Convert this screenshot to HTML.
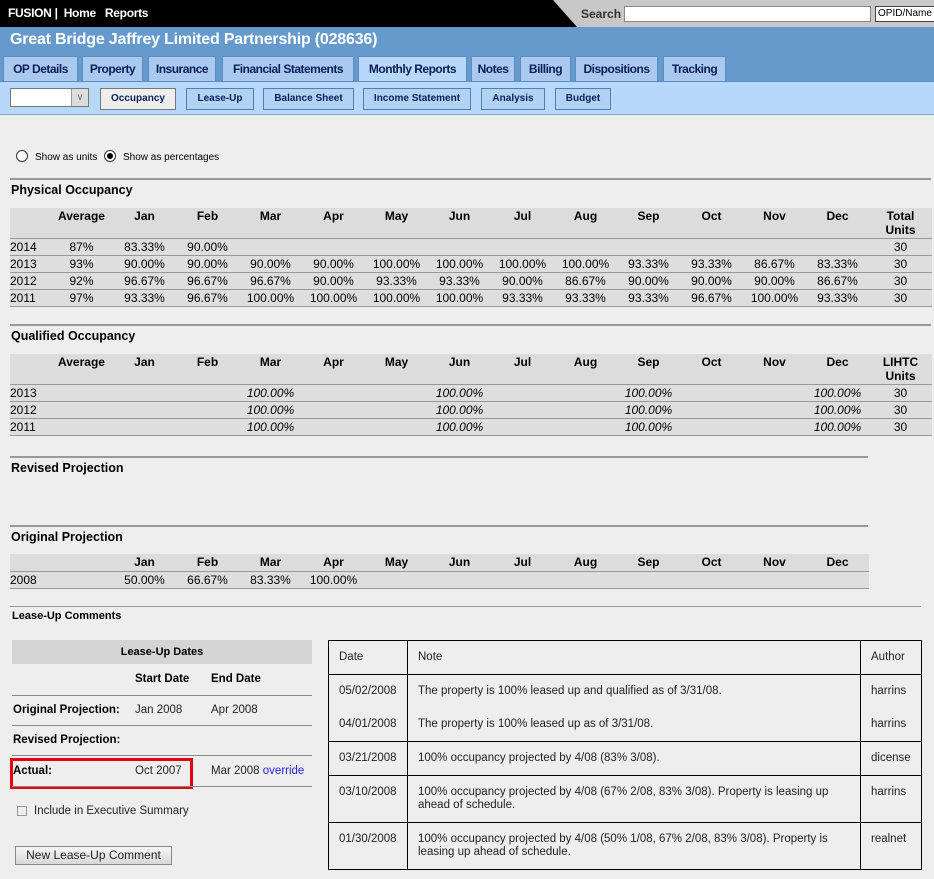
<!DOCTYPE html>
<html><head><meta charset="utf-8"><style>
*{margin:0;padding:0;box-sizing:border-box}
body{width:934px;height:879px;background:#eeeeee;font-family:"Liberation Sans",Arial,sans-serif;font-size:12px;color:#000;position:relative;overflow:hidden}
.a{position:absolute}
.top{left:0;top:0;width:934px;height:27px;background:#000}
.tab{position:absolute;top:56px;height:26px;background:#a9c9ee;border:1px solid #5c8cc0;border-bottom:none;color:#0a1e58;font-weight:bold;font-size:12px;letter-spacing:-0.5px;line-height:24px;text-align:center;white-space:nowrap}
.btn{position:absolute;top:88px;height:22px;background:#b2d2f4;border:1px solid #4e7eb4;color:#0a1e58;font-weight:bold;font-size:10px;line-height:20px;text-align:center}
.hr{position:absolute;height:2px;background:#999}
.ttl{position:absolute;left:11px;font-weight:bold;font-size:12.5px}
table.g{position:absolute;left:10px;border-collapse:collapse;table-layout:fixed;font-size:12px}
table.g td{text-align:center;padding:0;height:17px;border-bottom:1px solid #999;background:#dedede;white-space:nowrap}
table.g td:first-child{text-align:left}
table.g tr.h td{font-weight:bold;height:30px;vertical-align:top;padding-top:1px;background:#dcdcdc;line-height:14px}
table.g tr.s td{font-weight:bold;height:17px;background:#dcdcdc}
table.g i{font-style:italic}
table.c{position:absolute;left:328px;top:640px;width:593px;border-collapse:collapse;font-size:11.5px;color:#222;table-layout:fixed}
table.c td{border:1px solid #000;padding:0 10px;vertical-align:top}
</style></head><body>
<div class="a top"></div>
<div class="a" style="left:8px;top:6px;color:#fff;font-weight:bold;font-size:12px;letter-spacing:-0.3px">FUSION&nbsp;|&nbsp; Home &nbsp; Reports</div>
<div class="a" style="left:553px;top:0;width:381px;height:27px;background:#c8c8c8;clip-path:polygon(0 0,100% 0,100% 100%,24px 100%)"></div>
<div class="a" style="left:581px;top:7px;color:#333;font-weight:bold;font-size:12px">Search</div>
<div class="a" style="left:624px;top:6px;width:247px;height:16px;background:#fff;border:1px solid #888"></div>
<div class="a" style="left:875px;top:6px;width:60px;height:16px;background:#fff;border:1px solid #444;font-size:10px;line-height:14px;padding-left:2px">OPID/Name</div>
<div class="a" style="left:0;top:27px;width:934px;height:55px;background:#6699cc"></div>
<div class="a" style="left:10px;top:31px;color:#fff;font-weight:bold;font-size:16px;letter-spacing:-0.2px">Great Bridge Jaffrey Limited Partnership (028636)</div>
<div class="tab" style="left:3px;width:75px">OP Details</div>
<div class="tab" style="left:82px;width:61px">Property</div>
<div class="tab" style="left:148px;width:68px">Insurance</div>
<div class="tab" style="left:222px;width:132px">Financial Statements</div>
<div class="tab" style="left:358px;width:109px;background:#b8d8fa;height:27px">Monthly Reports</div>
<div class="tab" style="left:471px;width:44px">Notes</div>
<div class="tab" style="left:520px;width:51px">Billing</div>
<div class="tab" style="left:575px;width:83px">Dispositions</div>
<div class="tab" style="left:663px;width:63px">Tracking</div>
<div class="a" style="left:0;top:81px;width:934px;height:1px;background:#5c8cc0"></div>
<div class="a" style="left:0;top:82px;width:934px;height:33px;background:#b8d8fa;border-bottom:1px solid #7aa"></div>
<div class="a" style="left:10px;top:88px;width:79px;height:19px;background:#fff;border:1px solid #777"><div style="position:absolute;right:0;top:0;width:17px;height:17px;background:#ddd;border-left:1px solid #999;color:#777;font-size:10px;text-align:center;line-height:17px">&#8744;</div></div>
<div class="btn" style="left:100px;width:76px;background:#eee;border-color:#777">Occupancy</div>
<div class="btn" style="left:186px;width:68px">Lease-Up</div>
<div class="btn" style="left:263px;width:91px">Balance Sheet</div>
<div class="btn" style="left:363px;width:108px">Income Statement</div>
<div class="btn" style="left:481px;width:64px">Analysis</div>
<div class="btn" style="left:555px;width:56px">Budget</div>

<div class="a" style="left:16px;top:150px;width:12px;height:12px;border:1px solid #333;border-radius:50%;background:#fff"></div>
<div class="a" style="left:35px;top:152px;font-size:10px">Show as units</div>
<div class="a" style="left:104px;top:150px;width:12px;height:12px;border:1px solid #333;border-radius:50%;background:#fff"><div style="margin:2px;width:6px;height:6px;border-radius:50%;background:#000"></div></div>
<div class="a" style="left:123px;top:152px;font-size:10px">Show as percentages</div>

<div class="hr" style="left:10px;top:178px;width:921px"></div>
<div class="ttl" style="top:183px">Physical Occupancy</div>
<table class="g" style="top:208px;width:921px">
<colgroup><col style="width:40px"><col span="14" style="width:63px"></colgroup>
<tr class="h"><td></td><td>Average</td><td>Jan</td><td>Feb</td><td>Mar</td><td>Apr</td><td>May</td><td>Jun</td><td>Jul</td><td>Aug</td><td>Sep</td><td>Oct</td><td>Nov</td><td>Dec</td><td>Total<br>Units</td></tr>
<tr><td>2014</td><td>87%</td><td>83.33%</td><td>90.00%</td><td></td><td></td><td></td><td></td><td></td><td></td><td></td><td></td><td></td><td></td><td>30</td></tr>
<tr><td>2013</td><td>93%</td><td>90.00%</td><td>90.00%</td><td>90.00%</td><td>90.00%</td><td>100.00%</td><td>100.00%</td><td>100.00%</td><td>100.00%</td><td>93.33%</td><td>93.33%</td><td>86.67%</td><td>83.33%</td><td>30</td></tr>
<tr><td>2012</td><td>92%</td><td>96.67%</td><td>96.67%</td><td>96.67%</td><td>90.00%</td><td>93.33%</td><td>93.33%</td><td>90.00%</td><td>86.67%</td><td>90.00%</td><td>90.00%</td><td>90.00%</td><td>86.67%</td><td>30</td></tr>
<tr><td>2011</td><td>97%</td><td>93.33%</td><td>96.67%</td><td>100.00%</td><td>100.00%</td><td>100.00%</td><td>100.00%</td><td>93.33%</td><td>93.33%</td><td>93.33%</td><td>96.67%</td><td>100.00%</td><td>93.33%</td><td>30</td></tr>
</table>

<div class="hr" style="left:10px;top:324px;width:921px"></div>
<div class="ttl" style="top:329px">Qualified Occupancy</div>
<table class="g" style="top:354px;width:921px">
<colgroup><col style="width:40px"><col span="14" style="width:63px"></colgroup>
<tr class="h"><td></td><td>Average</td><td>Jan</td><td>Feb</td><td>Mar</td><td>Apr</td><td>May</td><td>Jun</td><td>Jul</td><td>Aug</td><td>Sep</td><td>Oct</td><td>Nov</td><td>Dec</td><td>LIHTC<br>Units</td></tr>
<tr><td>2013</td><td></td><td></td><td></td><td><i>100.00%</i></td><td></td><td></td><td><i>100.00%</i></td><td></td><td></td><td><i>100.00%</i></td><td></td><td></td><td><i>100.00%</i></td><td>30</td></tr>
<tr><td>2012</td><td></td><td></td><td></td><td><i>100.00%</i></td><td></td><td></td><td><i>100.00%</i></td><td></td><td></td><td><i>100.00%</i></td><td></td><td></td><td><i>100.00%</i></td><td>30</td></tr>
<tr><td>2011</td><td></td><td></td><td></td><td><i>100.00%</i></td><td></td><td></td><td><i>100.00%</i></td><td></td><td></td><td><i>100.00%</i></td><td></td><td></td><td><i>100.00%</i></td><td>30</td></tr>
</table>

<div class="hr" style="left:10px;top:456px;width:858px"></div>
<div class="ttl" style="top:461px">Revised Projection</div>
<div class="hr" style="left:10px;top:525px;width:858px"></div>
<div class="ttl" style="top:530px">Original Projection</div>
<table class="g" style="top:554px;width:858px">
<colgroup><col style="width:40px"><col span="13" style="width:63px"></colgroup>
<tr class="s"><td></td><td></td><td>Jan</td><td>Feb</td><td>Mar</td><td>Apr</td><td>May</td><td>Jun</td><td>Jul</td><td>Aug</td><td>Sep</td><td>Oct</td><td>Nov</td><td>Dec</td></tr>
<tr><td>2008</td><td></td><td>50.00%</td><td>66.67%</td><td>83.33%</td><td>100.00%</td><td></td><td></td><td></td><td></td><td></td><td></td><td></td><td></td></tr>
</table>

<div class="a" style="left:10px;top:606px;width:911px;height:1px;background:#999"></div>
<div class="a" style="left:12px;top:610px;font-weight:bold;font-size:11px">Lease-Up Comments</div>

<div class="a" style="left:12px;top:640px;width:300px;height:24px;background:#d4d4d4;text-align:center;font-weight:bold;font-size:11px;line-height:24px">Lease-Up Dates</div>
<div class="a" style="left:135px;top:673px;font-weight:bold;font-size:11.5px">Start Date</div>
<div class="a" style="left:211px;top:673px;font-weight:bold;font-size:11.5px">End Date</div>
<div class="a" style="left:12px;top:695px;width:300px;height:1px;background:#888"></div>
<div class="a" style="left:13px;top:704px;font-weight:bold;font-size:11.5px">Original Projection:</div>
<div class="a" style="left:135px;top:704px;font-size:11.5px;color:#222">Jan 2008</div>
<div class="a" style="left:211px;top:704px;font-size:11.5px;color:#222">Apr 2008</div>
<div class="a" style="left:12px;top:725px;width:300px;height:1px;background:#888"></div>
<div class="a" style="left:13px;top:734px;font-weight:bold;font-size:11.5px">Revised Projection:</div>
<div class="a" style="left:12px;top:755px;width:300px;height:1px;background:#888"></div>
<div class="a" style="left:10px;top:758px;width:183px;height:31px;border:3px solid #e8000b"></div>
<div class="a" style="left:13px;top:765px;font-weight:bold;font-size:11.5px">Actual:</div>
<div class="a" style="left:135px;top:765px;font-size:11.5px;color:#222">Oct 2007</div>
<div class="a" style="left:211px;top:765px;font-size:11.5px;color:#222">Mar 2008 <span style="color:#2222dd">override</span></div>
<div class="a" style="left:12px;top:786px;width:300px;height:1px;background:#888"></div>
<div class="a" style="left:17px;top:806px;width:10px;height:10px;border:1px solid #999;background:#eee"></div>
<div class="a" style="left:34px;top:805px;font-size:11.5px;color:#222">Include in Executive Summary</div>
<div class="a" style="left:15px;top:846px;width:157px;height:19px;border:1px solid #888;background:linear-gradient(#f6f6f6,#d8d8d8);font-size:12px;line-height:17px;text-align:center;color:#222">New Lease-Up Comment</div>

<table class="c">
<colgroup><col style="width:79px"><col style="width:453px"><col style="width:61px"></colgroup>
<tr style="height:34px"><td style="padding-top:10px">Date</td><td style="padding-top:10px">Note</td><td style="padding-top:10px">Author</td></tr>
<tr style="height:67px"><td style="line-height:33px">05/02/2008<br>04/01/2008</td><td style="line-height:33px">The property is 100% leased up and qualified as of 3/31/08.<br>The property is 100% leased up as of 3/31/08.</td><td style="line-height:33px">harrins<br>harrins</td></tr>
<tr style="height:34px"><td style="padding-top:10px">03/21/2008</td><td style="padding-top:10px">100% occupancy projected by 4/08 (83% 3/08).</td><td style="padding-top:10px">dicense</td></tr>
<tr style="height:47px"><td style="padding-top:10px">03/10/2008</td><td style="padding-top:10px;line-height:13px">100% occupancy projected by 4/08 (67% 2/08, 83% 3/08). Property is leasing up ahead of schedule.</td><td style="padding-top:10px">harrins</td></tr>
<tr style="height:47px"><td style="padding-top:10px">01/30/2008</td><td style="padding-top:10px;line-height:13px">100% occupancy projected by 4/08 (50% 1/08, 67% 2/08, 83% 3/08). Property is leasing up ahead of schedule.</td><td style="padding-top:10px">realnet</td></tr>
</table>
</body></html>
